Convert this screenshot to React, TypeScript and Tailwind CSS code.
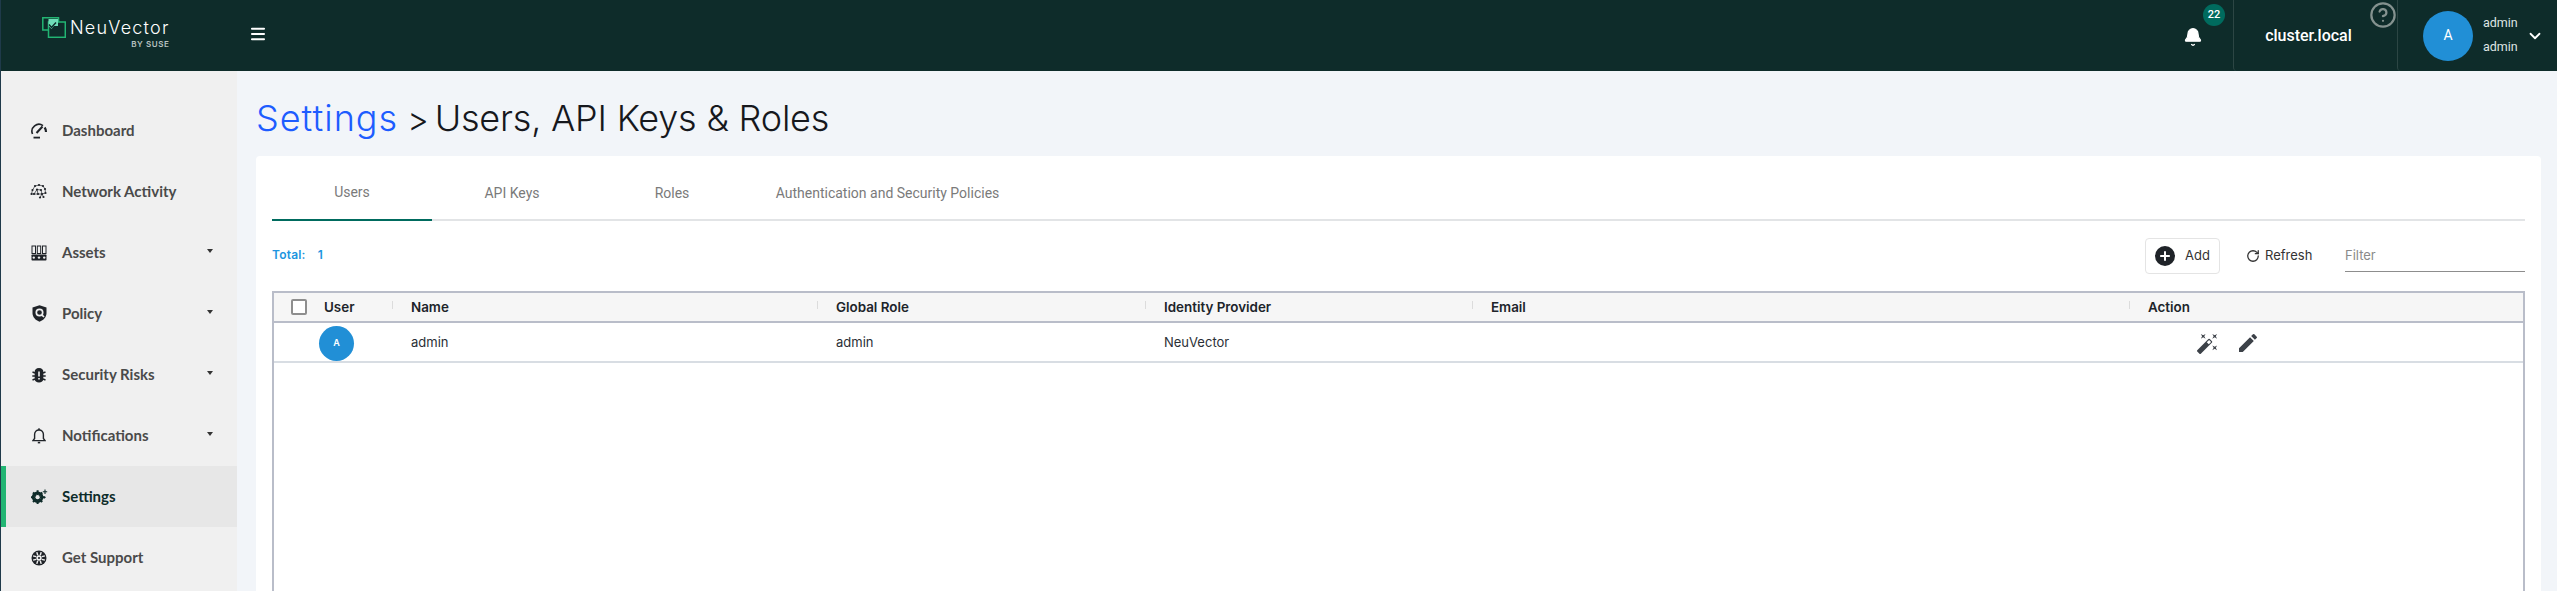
import { Bell, ChevronDown, CircleHelp, Menu, Plus, RotateCw } from 'lucide-react';
import type { ReactNode } from 'react';

function DashboardIcon() {
  return (
    <svg width="18" height="16" viewBox="0 0 18 16" fill="none" stroke="#1f2328" strokeWidth="1.6">
      <path d="M2.5 11 A7 7 0 0 1 13 2.6" />
      <path d="M14.6 4.5 A7 7 0 0 1 16 9" strokeWidth="2.2" />
      <path d="M6.5 10 L12.5 3.5" strokeWidth="2" />
      <path d="M3.5 14.6 H10" strokeWidth="1.8" />
    </svg>
  );
}

function NetworkIcon() {
  const dots = [[9, 2], [5, 3], [13, 3], [2.5, 7], [7, 6.5], [11, 7], [15, 6], [4, 11], [8, 11], [12, 11], [15.5, 10], [1.5, 11], [10, 14.5], [13.5, 14]];
  return (
    <svg width="18" height="17" viewBox="0 0 18 17" fill="#1f2328" stroke="#1f2328" strokeWidth="0.7">
      <path d="M5 3 L9 2 L13 3 L15 6 L15.5 10 L12 11 L8 11 L4 11 L1.5 11 L2.5 7 L5 3 M7 6.5 L11 7 L12 11 M7 6.5 L4 11 M7 6.5 L8 11 M10 14.5 L12 11 M13.5 14 L12 11" fill="none" />
      {dots.map(([x, y]) => (
        <circle key={`${x}-${y}`} cx={x} cy={y} r="1.1" stroke="none" />
      ))}
    </svg>
  );
}

function AssetsIcon() {
  return (
    <svg width="16" height="16" viewBox="0 0 16 16" fill="#1f2328">
      <path d="M0.5 0.5 H5 V9 H0.5 Z M1.5 1.5 V8 H4 V1.5 Z M5.8 0.5 H10.2 V9 H5.8 Z M6.8 1.5 V8 H9.2 V1.5 Z M11 0.5 H15.5 V9 H11 Z M12 1.5 V8 H14.5 V1.5 Z" fillRule="evenodd" />
      <rect x="0.5" y="9.5" width="15" height="6" rx="0.8" />
      <circle cx="2.8" cy="12.6" r="1.2" fill="#f0f0f0" />
      <circle cx="8" cy="12.6" r="1.2" fill="#f0f0f0" />
      <circle cx="13.2" cy="12.6" r="1.2" fill="#f0f0f0" />
    </svg>
  );
}

function PolicyIcon() {
  return (
    <svg width="15" height="17" viewBox="0 0 15 17">
      <path d="M7.5 0.3 L14.5 2.6 V8 C14.5 12 11.5 15.3 7.5 16.7 C3.5 15.3 0.5 12 0.5 8 V2.6 Z" fill="#1f2328" />
      <circle cx="7.5" cy="7.5" r="3.2" fill="none" stroke="#f0f0f0" strokeWidth="1.7" />
      <path d="M9.8 9.8 L12 12" stroke="#f0f0f0" strokeWidth="1.7" />
    </svg>
  );
}

function BugIcon() {
  return (
    <svg width="14" height="16" viewBox="0 0 14 16" fill="#1f2328">
      <path d="M7 1 C10 1 11.3 3 11.3 4.5 V12 C11.3 14 9.5 15.5 7 15.5 C4.5 15.5 2.7 14 2.7 12 V4.5 C2.7 3 4 1 7 1 Z" />
      <path d="M0.5 5 L3 6 M13.5 5 L11 6 M0.3 9 H3 M13.7 9 H11 M0.5 13 L3 12 M13.5 13 L11 12" stroke="#1f2328" strokeWidth="1.4" />
      <path d="M7 4.5 V9.5 M7 11 V12.6" stroke="#f0f0f0" strokeWidth="1.6" />
    </svg>
  );
}

function NotifyIcon() {
  return (
    <svg width="14" height="16" viewBox="0 0 14 16" fill="none" stroke="#1f2328" strokeWidth="1.4">
      <path d="M1 12.6 H13 L11.4 10.4 V6.5 C11.4 3.8 9.5 2 7 2 C4.5 2 2.6 3.8 2.6 6.5 V10.4 Z" />
      <path d="M7 0.2 V2" />
      <path d="M5.8 14.6 H8.2" strokeWidth="1.6" />
    </svg>
  );
}

function GearIcon() {
  return (
    <svg width="17" height="15" viewBox="0 0 17 15">
      <circle cx="6.6" cy="8.2" r="4.4" fill="none" stroke="#0f2c2a" strokeWidth="2.8" />
      <path d="M6.6 1.2 V15 M0 8.2 H13.2 M2 3.5 L11.2 13 M11.2 3.5 L2 13" stroke="#0f2c2a" strokeWidth="2" />
      <circle cx="6.6" cy="8.2" r="2.1" fill="#e7e7e7" />
      <path d="M14 0.5 V5 M11.8 2.8 H16.2 M13.4 7.2 V9.6 M12.2 8.4 H14.6" stroke="#0f2c2a" strokeWidth="1.1" />
    </svg>
  );
}

function SupportIcon() {
  return (
    <svg width="16" height="16" viewBox="0 0 16 16">
      <circle cx="8" cy="8" r="7.5" fill="#1f2328" />
      <circle cx="8" cy="8" r="2.7" fill="#f0f0f0" />
      <circle cx="8" cy="8" r="1.1" fill="#1f2328" />
      <path d="M5.8 2.1 L6.7 5.2 M10.2 2.1 L9.3 5.2 M2.1 5.8 L5.2 6.7 M2.1 10.2 L5.2 9.3" stroke="#f0f0f0" strokeWidth="1.4" />
      <path d="M13.9 5.8 L10.8 6.7 M13.9 10.2 L10.8 9.3 M5.8 13.9 L6.7 10.8 M10.2 13.9 L9.3 10.8" stroke="#f0f0f0" strokeWidth="1.4" />
    </svg>
  );
}

function WandIcon() {
  return (
    <svg width="23" height="23" viewBox="0 0 24 24" fill="#3c4148">
      <path d="M7.5 5.6L10 7 8.6 4.5 10 2 7.5 3.4 5 2l1.4 2.5L5 7zm12 9.8L17 14l1.4 2.5L17 19l2.5-1.4L22 19l-1.4-2.5L22 14zM22 2l-2.5 1.4L17 2l1.4 2.5L17 7l2.5-1.4L22 7l-1.4-2.5zm-7.63 5.29a.9959.9959 0 0 0-1.41 0L1.29 18.96c-.39.39-.39 1.02 0 1.41l2.34 2.34c.39.39 1.02.39 1.41 0L16.7 11.05c.39-.39.39-1.02 0-1.41l-2.33-2.35zm-1.03 5.49l-2.12-2.12 2.44-2.44 2.12 2.12-2.44 2.44z" />
    </svg>
  );
}

function EditIcon() {
  return (
    <svg width="24" height="24" viewBox="0 0 24 24" fill="#3c4148">
      <path d="M3 17.25V21h3.75L17.81 9.94l-3.75-3.75L3 17.25zM20.71 7.04a1 1 0 0 0 0-1.41l-2.34-2.34a1 1 0 0 0-1.41 0l-1.83 1.83 3.75 3.75 1.83-1.83z" />
    </svg>
  );
}

function Logo() {
  return (
    <svg width="24" height="21" viewBox="0 0 24 21" fill="none" className="shrink-0 mt-[1px]">
      <path d="M6.5 13 H0.8 V0.8 H16.5 V5" stroke="#22b573" strokeWidth="1.5" />
      <rect x="6.5" y="5" width="16.8" height="15.3" stroke="#22b573" strokeWidth="1.5" />
      <path d="M6.5 2 H16 V9 H12 L9.5 12 L6.5 9 Z" fill="#6fdcb8" />
      <path d="M7 7.5 L9.5 10.5 L14 5.5" stroke="#0e2c2a" strokeWidth="1.4" />
    </svg>
  );
}

type NavItem = { label: string; icon: ReactNode; caret?: boolean; active?: boolean };

const NAV: NavItem[] = [
  { label: 'Dashboard', icon: <DashboardIcon /> },
  { label: 'Network Activity', icon: <NetworkIcon /> },
  { label: 'Assets', icon: <AssetsIcon />, caret: true },
  { label: 'Policy', icon: <PolicyIcon />, caret: true },
  { label: 'Security Risks', icon: <BugIcon />, caret: true },
  { label: 'Notifications', icon: <NotifyIcon />, caret: true },
  { label: 'Settings', icon: <GearIcon />, active: true },
  { label: 'Get Support', icon: <SupportIcon /> },
];

const TABS = [
  { label: 'Users', width: 'w-[160px]', active: true },
  { label: 'API Keys', width: 'w-[160px]' },
  { label: 'Roles', width: 'w-[160px]' },
  { label: 'Authentication and Security Policies', width: 'w-[271px]' },
];

const COLUMNS = 'grid grid-cols-[137px_425px_328px_327px_657px_1fr]';

function Tick() {
  return <span className="absolute left-[-19px] top-[4px] w-px h-[8px] bg-[#dcdcdc]" />;
}

export default function App() {
  return (
    <div className="flex flex-col h-[591px] w-[2557px] overflow-hidden bg-[#f2f5f9] border-l border-[#1f3a4a] font-['Inter',sans-serif]">
      <header className="flex items-center h-[71px] shrink-0 bg-[#0e2c2a] text-white">
        <div className="flex items-start w-[248px] pl-[41px] h-full pt-[16px] gap-[4px]">
          <Logo />
          <div className="flex flex-col items-end">
            <span className="font-light text-[18px] leading-[24px] tracking-[1.2px]">NeuVector</span>
            <span className="font-semibold text-[8px] leading-[9px] text-[#b7c2c0] tracking-[0.6px]">BY SUSE</span>
          </div>
        </div>
        <Menu size={18} strokeWidth={2.8} className="mb-[3px]" />
        <div className="flex-1" />
        <div className="flex items-center h-full w-[50px] relative mr-[-1px]">
          <Bell size={20} fill="white" strokeWidth={1.5} className="mt-[2px] ml-[-1px]" />
          <span className="absolute left-[19px] top-[4px] flex items-center justify-center w-[22px] h-[22px] rounded-full bg-[#006b5e] text-[11px] font-medium font-['Roboto',sans-serif]">22</span>
        </div>
        <div className="relative flex items-center justify-center h-full w-[164px] border-l border-[#2c4644] rounded-bl-[4px] pr-[14px]">
          <span className="font-['Roboto',sans-serif] font-medium text-[16px]">cluster.local</span>
          <CircleHelp size={28} strokeWidth={1.9} className="absolute right-[0px] top-[1px] text-[#84928f]" />
        </div>
        <div className="flex items-center h-full w-[160px] border-l border-[#2c4644] rounded-bl-[4px] pl-[25px]">
          <div className="flex items-center justify-center w-[50px] h-[50px] rounded-full bg-[#218fd6] font-['Roboto',sans-serif] text-[14px]">A</div>
          <div className="flex flex-col ml-[10px] font-['Roboto',sans-serif] text-[12.5px] leading-[24px] text-[#dfe5e4] mb-[1px]">
            <span>admin</span>
            <span>admin</span>
          </div>
          <ChevronDown size={18} strokeWidth={2.4} className="ml-[8px]" />
        </div>
      </header>

      <div className="flex flex-1 min-h-0">
        <nav className="w-[236px] shrink-0 bg-[#f0f0f0] pt-[29px] font-['Lato',sans-serif] font-bold text-[15px]">
          {NAV.map((item) => (
            <div
              key={item.label}
              className={`flex items-center h-[61px] ${item.active ? 'bg-[#e7e7e7] border-l-[5px] border-[#22b573] pl-[24px] text-[#0e2c2a]' : 'pl-[29px] text-[#4a4a4a]'}`}
            >
              <span className="flex items-center justify-center w-[18px] mr-[14px]">{item.icon}</span>
              <span>{item.label}</span>
              {item.caret && <span className="ml-auto mr-[24px] mb-[3px] w-0 h-0 border-x-[3.5px] border-x-transparent border-t-[4px] border-t-[#333]" />}
            </div>
          ))}
        </nav>

        <main className="flex-1 min-w-0 pl-[19px] pr-[16px]">
          <h1 className="flex items-baseline mt-[22px] h-[63px] text-[36px] leading-[50px] font-light text-[#16181d] whitespace-pre">
            <span className="text-[#1d5cff] tracking-[1px]">Settings</span>
            <span className="text-[33px] ml-[9px] mr-[6px]">&gt;</span>
            <span className="tracking-[-0.2px]">Users, API Keys &amp; Roles</span>
          </h1>
          <section className="bg-white rounded-t-[4px] h-[500px] px-[16px]">
            <div className="flex h-[65px] border-b-2 border-[#e2e4e6] font-['Roboto',sans-serif] text-[14px] text-[#7a7a7a]">
              {TABS.map((tab) => (
                <div key={tab.label} className={`flex items-center justify-center h-[65px] pt-[10px] whitespace-nowrap ${tab.width} ${tab.active ? 'border-b-2 border-[#006b5e]' : ''}`}>
                  {tab.label}
                </div>
              ))}
            </div>

            <div className="flex items-center h-[70px]">
              <span className="mb-[2px] font-semibold text-[12px] text-[#2095e0] tracking-[0.2px]">Total:</span>
              <span className="mb-[2px] ml-[12px] font-semibold text-[12px] text-[#2095e0]">1</span>
              <div className="flex-1" />
              <button className="flex items-center justify-center w-[75px] h-[36px] border border-[#e4e4e4] rounded-[4px] gap-[10px] text-[13px] text-[#333]">
                <span className="flex items-center justify-center w-[20px] h-[20px] rounded-full bg-[#1f2328]">
                  <Plus size={14} strokeWidth={3.4} className="text-white" />
                </span>
                Add
              </button>
              <div className="flex items-center ml-[26px] w-[99px] text-[13px] text-[#333] gap-[5px]">
                <RotateCw size={14} strokeWidth={2.2} />
                Refresh
              </div>
              <div className="flex items-center w-[180px] h-[32px] border-b border-[#8d8d8d] text-[13px] text-[#8a8a8a]">Filter</div>
            </div>

            <div className="h-[300px] border-x-2 border-t-2 border-[#b9bdc9]">
              <div className={`${COLUMNS} h-[30px] bg-[#f6f6f6] border-b-2 border-[#b9bdc9] text-[13.4px] font-semibold text-[#20242a] items-center`}>
                <div className="flex items-center pl-[17px] gap-[17px]">
                  <span className="w-[16px] h-[16px] border-2 border-[#8e8e8e] rounded-[2px] bg-white" />
                  User
                </div>
                <div className="relative"><Tick />Name</div>
                <div className="relative"><Tick />Global Role</div>
                <div className="relative"><Tick />Identity Provider</div>
                <div className="relative"><Tick />Email</div>
                <div className="relative"><Tick />Action</div>
              </div>
              <div className={`${COLUMNS} h-[40px] pt-[2px] border-b-2 border-[#d8dde3] text-[13px] text-[#2b2f36] items-center`}>
                <div className="flex items-center pl-[45px]">
                  <span className="flex items-center justify-center w-[35px] h-[35px] rounded-full bg-[#218fd6] text-[9px] font-semibold text-white">A</span>
                </div>
                <div>admin</div>
                <div>admin</div>
                <div>NeuVector</div>
                <div />
                <div className="flex items-center gap-[17px] pl-[48px]">
                  <WandIcon />
                  <EditIcon />
                </div>
              </div>
            </div>
          </section>
        </main>
      </div>
    </div>
  );
}
